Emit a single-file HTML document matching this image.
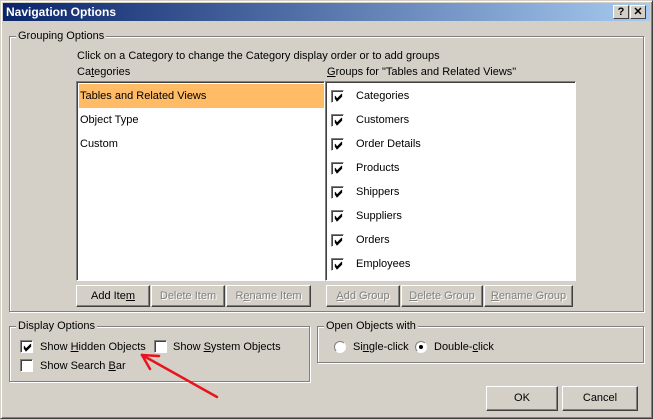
<!DOCTYPE html><html><head><style>
*{box-sizing:border-box;margin:0;padding:0}
body{width:653px;height:419px;background:#d4d0c8;font-family:"Liberation Sans",sans-serif;font-size:11px;color:#000;position:relative;overflow:hidden}
.a{position:absolute;white-space:nowrap}
.win{position:absolute;left:0;top:0;width:653px;height:419px;border:1px solid;border-color:#d4d0c8 #404040 #404040 #d4d0c8;box-shadow:inset 1px 1px #fff,inset -1px -1px #808080}
.title{position:absolute;left:3px;top:3px;width:647px;height:18px;background:linear-gradient(to right,#0a246a,#a6caf0);color:#fff;font-weight:bold;font-size:12px;line-height:18px;padding-left:3px}
.tb{position:absolute;top:5px;width:16px;height:14px;background:#d4d0c8;border:1px solid;border-color:#fff #404040 #404040 #fff;font-size:11px;font-weight:bold;text-align:center;line-height:12px;color:#000}
.fr{position:absolute;border:1px solid #808080;box-shadow:1px 1px #fff,inset 1px 1px #fff}
.lab{position:absolute;top:-7px;left:6px;background:#d4d0c8;padding:0 2px;line-height:13px}
.list{position:absolute;background:#fff;border:1px solid;border-color:#808080 #fff #fff #808080;box-shadow:inset 1px 1px #404040}
.btn{position:absolute;height:22px;background:#d4d0c8;border:1px solid;border-color:#fff #404040 #404040 #fff;box-shadow:inset -1px -1px #808080;text-align:center;line-height:20px}
.dis{color:#808080;text-shadow:1px 1px #fff}
.cb{position:absolute;width:13px;height:13px;background:#fff;border:1px solid;border-color:#808080 #fff #fff #808080;box-shadow:inset 1px 1px #404040}
.cb svg{position:absolute;left:1px;top:1px}
.rd{position:absolute;width:12px;height:12px;border-radius:50%;background:#fff;border:1px solid;border-color:#808080 #fff #fff #808080}
u{text-decoration:underline}
</style></head><body>
<div class="win"></div>
<div class="title">Navigation Options</div>
<div class="tb" style="left:613px">?</div><div class="tb" style="left:630px">✕</div>

<div class="fr" style="left:9px;top:36px;width:635px;height:276px"><span class="lab">Grouping Options</span></div>
<div class="a" style="left:77px;top:50px">Click on a Category to change the Category display order or to add groups</div>
<div class="a" style="left:77px;top:66px">Ca<u>t</u>egories</div>
<div class="a" style="left:327px;top:66px"><u>G</u>roups for "Tables and Related Views"</div>

<div class="list" style="left:76px;top:81px;width:249px;height:200px">
<div class="a" style="left:2px;top:2px;width:245px;height:24px;background:#ffbb66"></div>
<div class="a" style="left:3px;top:8px">Tables and Related Views</div>
<div class="a" style="left:3px;top:32px">Object Type</div>
<div class="a" style="left:3px;top:56px">Custom</div>
</div>
<div class="list" style="left:325px;top:81px;width:251px;height:200px">
<div class="cb" style="left:5px;top:8px"><svg width="11" height="11"><path d="M2 4 L4 7 L9 2 M2 5 L4 8 L9 3 M2 6 L4 9 L9 4" stroke="#000" fill="none"/></svg></div><div class="a" style="left:30px;top:8px">Categories</div>
<div class="cb" style="left:5px;top:32px"><svg width="11" height="11"><path d="M2 4 L4 7 L9 2 M2 5 L4 8 L9 3 M2 6 L4 9 L9 4" stroke="#000" fill="none"/></svg></div><div class="a" style="left:30px;top:32px">Customers</div>
<div class="cb" style="left:5px;top:56px"><svg width="11" height="11"><path d="M2 4 L4 7 L9 2 M2 5 L4 8 L9 3 M2 6 L4 9 L9 4" stroke="#000" fill="none"/></svg></div><div class="a" style="left:30px;top:56px">Order Details</div>
<div class="cb" style="left:5px;top:80px"><svg width="11" height="11"><path d="M2 4 L4 7 L9 2 M2 5 L4 8 L9 3 M2 6 L4 9 L9 4" stroke="#000" fill="none"/></svg></div><div class="a" style="left:30px;top:80px">Products</div>
<div class="cb" style="left:5px;top:104px"><svg width="11" height="11"><path d="M2 4 L4 7 L9 2 M2 5 L4 8 L9 3 M2 6 L4 9 L9 4" stroke="#000" fill="none"/></svg></div><div class="a" style="left:30px;top:104px">Shippers</div>
<div class="cb" style="left:5px;top:128px"><svg width="11" height="11"><path d="M2 4 L4 7 L9 2 M2 5 L4 8 L9 3 M2 6 L4 9 L9 4" stroke="#000" fill="none"/></svg></div><div class="a" style="left:30px;top:128px">Suppliers</div>
<div class="cb" style="left:5px;top:152px"><svg width="11" height="11"><path d="M2 4 L4 7 L9 2 M2 5 L4 8 L9 3 M2 6 L4 9 L9 4" stroke="#000" fill="none"/></svg></div><div class="a" style="left:30px;top:152px">Orders</div>
<div class="cb" style="left:5px;top:176px"><svg width="11" height="11"><path d="M2 4 L4 7 L9 2 M2 5 L4 8 L9 3 M2 6 L4 9 L9 4" stroke="#000" fill="none"/></svg></div><div class="a" style="left:30px;top:176px">Employees</div>
</div>

<div class="btn" style="left:76px;top:285px;width:74px">Add Ite<u>m</u></div>
<div class="btn dis" style="left:151px;top:285px;width:74px">Delete Item</div>
<div class="btn dis" style="left:226px;top:285px;width:85px">R<u>e</u>name Item</div>
<div class="btn dis" style="left:326px;top:285px;width:74px"><u>A</u>dd Group</div>
<div class="btn dis" style="left:401px;top:285px;width:82px"><u>D</u>elete Group</div>
<div class="btn dis" style="left:484px;top:285px;width:89px"><u>R</u>ename Group</div>

<div class="fr" style="left:9px;top:326px;width:301px;height:56px"><span class="lab">Display Options</span></div>
<div class="cb" style="left:20px;top:340px"><svg width="11" height="11"><path d="M2 4 L4 7 L9 2 M2 5 L4 8 L9 3 M2 6 L4 9 L9 4" stroke="#000" fill="none"/></svg></div><div class="a" style="left:40px;top:341px">Show <u>H</u>idden Objects</div>
<div class="cb" style="left:154px;top:340px"></div><div class="a" style="left:173px;top:341px">Show <u>S</u>ystem Objects</div>
<div class="cb" style="left:20px;top:359px"></div><div class="a" style="left:40px;top:360px">Show Search <u>B</u>ar</div>

<div class="fr" style="left:317px;top:326px;width:327px;height:37px"><span class="lab">Open Objects with</span></div>
<div class="rd" style="left:334px;top:341px"></div><div class="a" style="left:353px;top:341px">Si<u>n</u>gle-click</div>
<div class="rd" style="left:415px;top:341px"><div style="position:absolute;left:3px;top:3px;width:4px;height:4px;background:#000;border-radius:50%"></div></div><div class="a" style="left:434px;top:341px">Double-<u>c</u>lick</div>

<div class="btn" style="left:486px;top:386px;width:72px;height:25px;line-height:23px">OK</div>
<div class="btn" style="left:562px;top:386px;width:76px;height:25px;line-height:23px">Cancel</div>

<svg class="a" style="left:0;top:0" width="653" height="419"><g stroke="#e8141c" stroke-width="2.5" fill="none" stroke-linecap="round"><path d="M217 397 L142 355"/><path d="M142 355 L159 356"/><path d="M142 355 L150 369"/></g></svg>
</body></html>
